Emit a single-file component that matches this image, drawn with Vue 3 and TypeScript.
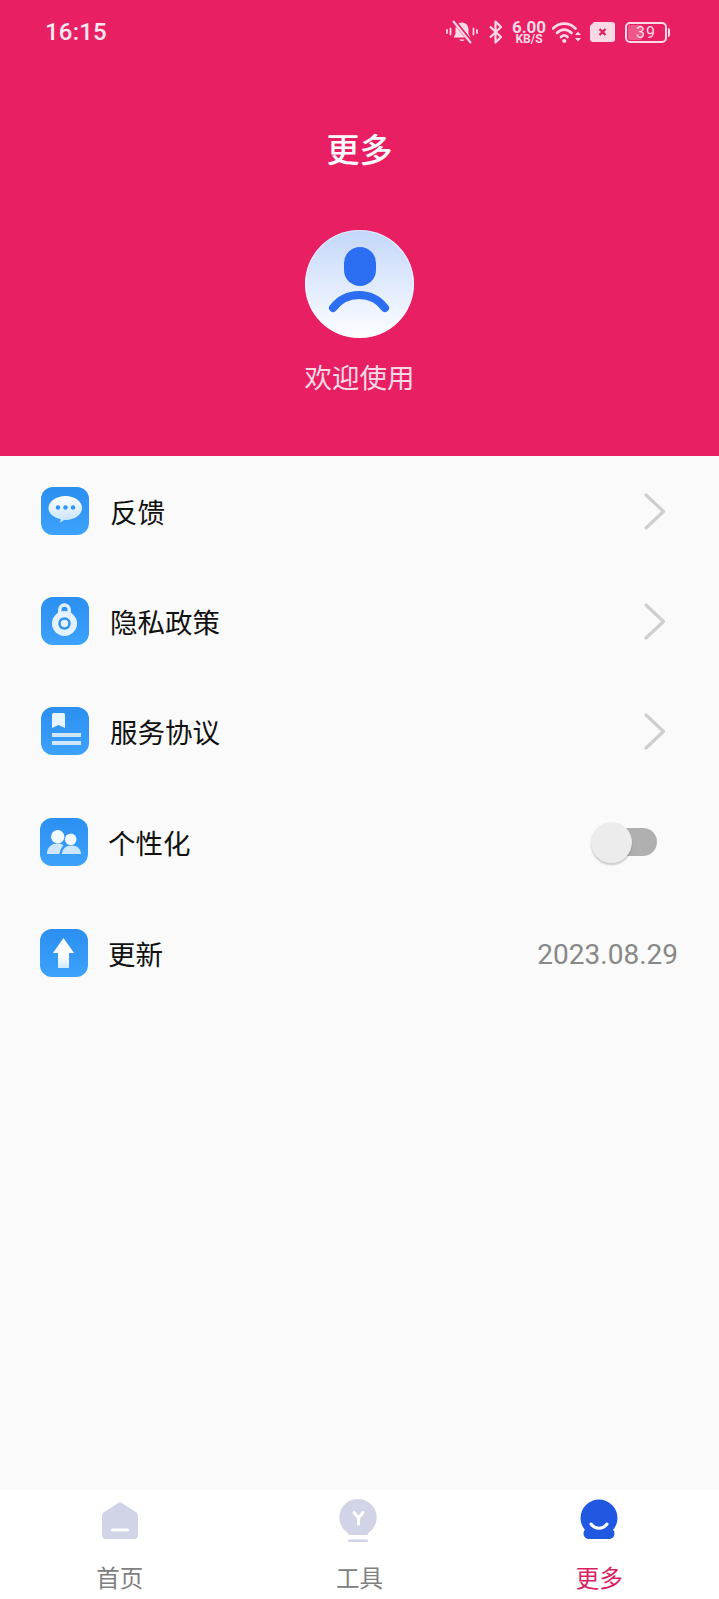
<script setup lang="ts">
const tabs = [
  { key: 'home', label: '首页' },
  { key: 'tool', label: '工具' },
  { key: 'more', label: '更多', active: true },
]
</script>

<template>
  <div class="page">
    <header class="hero">
      <div class="status">
        <span class="time">16:15</span>
        <div class="status-icons">
          <svg class="bell" width="32" height="24" viewBox="0 0 32 24">
            <path d="M16 2.5c-4 0-6.5 3-6.5 7v4.5L7.5 17.5h17L22.500 14V9.500c0-4-2.500-7-6.500-7z" fill="#fcd9e4" />
            <path d="M13.500 19.500h5c-.3 2-4.700 2-5 0z" fill="#fcd9e4" />
            <path d="M8 1l17 21" stroke="#e91f63" stroke-width="4" />
            <path d="M7.500 1.500l17 21" stroke="#fcd9e4" stroke-width="2" stroke-linecap="round" />
            <path d="M1 10v3M4.500 8.500v6M27.500 8.500v6M31 10v3" stroke="#fcd9e4" stroke-width="1.800" stroke-linecap="round" />
          </svg>
          <svg class="bt" width="13" height="24" viewBox="0 0 13 24">
            <path d="M1 6.500l11 10.500-5.500 5.500V1.500L12 7 1 17.500" fill="none" stroke="#fcd9e4" stroke-width="2.200" stroke-linejoin="round" />
          </svg>
          <div class="speed"><span class="speed-num">6.00</span><span class="speed-unit">KB/S</span></div>
          <svg class="wifi" width="30" height="24" viewBox="0 0 30 24">
            <path d="M1 8.500c6.500-6.500 16-6.500 22.500 0M5 13c4.500-4.500 10-4.500 14.500 0M9 17c2.300-2.200 4.300-2.200 6.500 0" fill="none" stroke="#fcd9e4" stroke-width="2.600" stroke-linecap="round" />
            <circle cx="12.300" cy="21" r="2.100" fill="#fcd9e4" />
            <path d="M26 11.500l3 3.500h-6zM26 21.500l-3-3.500h6z" fill="#fcd9e4" />
          </svg>
          <svg class="sim" width="25" height="20" viewBox="0 0 25 20">
            <path d="M4 0h18a3 3 0 0 1 3 3v14a3 3 0 0 1-3 3H3a3 3 0 0 1-3-3V4z" fill="#fcd9e4" />
            <path d="M9.500 7l6 6M15.500 7l-6 6" stroke="#d81c5c" stroke-width="2.200" />
          </svg>
          <div class="battery">
            <div class="battery-body"><span class="battery-fill"></span><span class="battery-num">39</span></div>
            <span class="battery-cap"></span>
          </div>
        </div>
      </div>

      <h1 class="title">更多</h1>

      <div class="avatar">
        <svg width="109" height="108" viewBox="0 0 109 108">
          <rect x="39" y="17" width="32" height="39" rx="16" fill="#2b6ef2" />
          <path d="M28 78A32.500 32.500 0 0 1 80 78" fill="none" stroke="#2b6ef2" stroke-width="8" stroke-linecap="round" />
        </svg>
      </div>
      <p class="welcome">欢迎使用</p>
    </header>

    <main class="list">
      <div class="row row-a">
        <span class="app-icon">
          <svg width="48" height="48" viewBox="0 0 48 48">
            <defs>
              <linearGradient id="bubble" x1="0" y1="0" x2="0" y2="1">
                <stop offset="0" stop-color="#ffffff" />
                <stop offset="1" stop-color="#c4e2fd" />
              </linearGradient>
            </defs>
            <path d="M24.500 9c9 0 16.500 5.400 16.500 12s-7.500 12-16.500 12c-.5 0-1 0-1.500-.1-1.300 1.300-2.600 2.100-4 2.500 .5-1.200 .7-2.300 .6-3.300C12.300 30.600 7.500 26.200 7.500 21 7.500 14.400 15.500 9 24.500 9z" fill="url(#bubble)" />
            <circle cx="17" cy="20.500" r="2.200" fill="#2f93f3" />
            <circle cx="24.500" cy="20.500" r="2.200" fill="#2f93f3" />
            <circle cx="32" cy="20.500" r="2.200" fill="#2f93f3" />
          </svg>
        </span>
        <span class="label">反馈</span>
        <svg class="chevron" width="22" height="37" viewBox="0 0 22 37">
          <path d="M2 2l17.500 16.500L2 35" fill="none" stroke="#cfcfcf" stroke-width="3.200" stroke-linecap="round" stroke-linejoin="round" />
        </svg>
      </div>

      <div class="row row-a">
        <span class="app-icon">
          <svg width="48" height="48" viewBox="0 0 48 48">
            <path d="M18.750 17v-4.250a4.750 4.750 0 0 1 9.500 0V17" fill="none" stroke="#dff0ff" stroke-width="3.500" />
            <circle cx="23.500" cy="26.500" r="12.500" fill="#e4f2ff" />
            <circle cx="23.500" cy="26.500" r="5" fill="none" stroke="#2f93f3" stroke-width="2.500" />
          </svg>
        </span>
        <span class="label">隐私政策</span>
        <svg class="chevron" width="22" height="37" viewBox="0 0 22 37">
          <path d="M2 2l17.500 16.500L2 35" fill="none" stroke="#cfcfcf" stroke-width="3.200" stroke-linecap="round" stroke-linejoin="round" />
        </svg>
      </div>

      <div class="row row-a">
        <span class="app-icon">
          <svg width="48" height="48" viewBox="0 0 48 48">
            <path d="M11 7.500a1.500 1.500 0 0 1 1.500-1.500h10a1.500 1.500 0 0 1 1.500 1.500V21l-6.500-3-6.500 3z" fill="#e8f4ff" />
            <rect x="11" y="26" width="29" height="4" fill="#cfe6fd" />
            <rect x="11" y="34" width="29" height="4" fill="#cfe6fd" />
          </svg>
        </span>
        <span class="label">服务协议</span>
        <svg class="chevron" width="22" height="37" viewBox="0 0 22 37">
          <path d="M2 2l17.500 16.500L2 35" fill="none" stroke="#cfcfcf" stroke-width="3.200" stroke-linecap="round" stroke-linejoin="round" />
        </svg>
      </div>

      <div class="row row-b row-tall">
        <span class="app-icon">
          <svg width="48" height="48" viewBox="0 0 48 48">
            <circle cx="17.700" cy="18.700" r="6.700" fill="#f2f9ff" />
            <circle cx="30.700" cy="21.300" r="5.800" fill="#f2f9ff" />
            <path d="M7 36c0-6 4-10.500 10.500-10.500 2.500 0 4.500.6 6 1.700C21 29.700 20 32.500 19.500 36z" fill="#cfe7fe" />
            <path d="M22 36c.4-5.500 4-8.500 9.500-8.500s9.100 3 9.500 8.500z" fill="#cfe7fe" />
          </svg>
        </span>
        <span class="label">个性化</span>
        <div class="toggle"><span class="toggle-thumb"></span></div>
      </div>

      <div class="row row-b">
        <span class="app-icon">
          <svg width="48" height="48" viewBox="0 0 48 48">
            <defs>
              <linearGradient id="arrow" x1="0" y1="0" x2="0" y2="1">
                <stop offset="0.600" stop-color="#ffffff" />
                <stop offset="1" stop-color="#cfe7fe" />
              </linearGradient>
            </defs>
            <path d="M23.500 9L34 24h-5v15H18V24h-5z" fill="url(#arrow)" />
          </svg>
        </span>
        <span class="label">更新</span>
        <span class="date">2023.08.29</span>
      </div>
    </main>

    <nav class="tabbar">
      <div v-for="tab in tabs" :key="tab.key" class="tab" :class="{ active: tab.active }">
        <svg width="40" height="44" viewBox="0 -2 40 44">
          <template v-if="tab.key === 'home'">
            <path d="M17.500 3.500a4 4 0 0 1 5 0l12.500 8A5 5 0 0 1 38 16v19a4 4 0 0 1-4 4H6a4 4 0 0 1-4-4V16a5 5 0 0 1 3-4.500z" fill="#d0d4e6" />
            <rect x="11" y="28.500" width="18" height="3" rx="1.500" fill="#fff" />
          </template>
          <template v-else-if="tab.key === 'tool'">
            <path d="M19 -1a18.500 18.500 0 0 1 11 33.500c-1 .8-1.500 1.500-1.500 2.500h-19c0-1-.5-1.700-1.500-2.500A18.500 18.500 0 0 1 19 -1z" fill="#d0d4e6" />
            <path d="M15 12.500l4.500 5.500 4.500-5.500M19.500 18v6" fill="none" stroke="#fff" stroke-width="3" stroke-linecap="round" stroke-linejoin="round" />
            <rect x="9" y="39.500" width="20" height="2.500" rx="1" fill="#d0d4e6" />
          </template>
          <template v-else>
            <circle cx="20" cy="18" r="18.500" fill="#2158e2" />
            <rect x="4.500" y="28" width="31" height="11" rx="5.500" fill="#2158e2" />
            <path d="M12 24c4 5.500 12 5.500 16 0" fill="none" stroke="#fff" stroke-width="3" stroke-linecap="round" />
          </template>
        </svg>
        <span class="tab-label">{{ tab.label }}</span>
      </div>
    </nav>
  </div>
</template>

<style>
html, body { margin: 0; background: #fafafa; }
</style>

<style scoped>
.page {
  display: flex;
  flex-direction: column;
  width: 719px;
  height: 1599px;
  overflow: hidden;
  background: #fafafa;
  font-family: "Noto Sans CJK SC", "Noto Sans", sans-serif;
}

.hero {
  display: flex;
  flex-direction: column;
  align-items: center;
  height: 456px;
  background: #e91f63;
  color: #fff;
}

.status {
  display: flex;
  align-items: center;
  justify-content: space-between;
  align-self: stretch;
  box-sizing: border-box;
  height: 64px;
  padding: 0 49px 0 45px;
  color: #fcd9e4;
}

.time {
  font-family: Roboto, sans-serif;
  font-size: 24px;
  font-weight: 500;
  letter-spacing: 0.2px;
  color: #fde8ef;
}

.status-icons {
  display: flex;
  align-items: center;
}

.bt { margin-left: 11px; }
.wifi { margin-left: 6px; }
.sim { margin-left: 8px; }

.speed {
  display: flex;
  flex-direction: column;
  align-items: center;
  width: 34px;
  margin-left: 10px;
  font-family: Roboto, sans-serif;
  font-weight: 700;
}

.speed-num { font-size: 17px; line-height: 14px; }
.speed-unit { font-size: 12px; line-height: 11px; }

.battery {
  display: flex;
  align-items: center;
  margin-left: 10px;
}

.battery-body {
  position: relative;
  box-sizing: border-box;
  display: flex;
  align-items: center;
  justify-content: center;
  width: 42px;
  height: 21px;
  border: 2px solid #fcd9e4;
  border-radius: 5px;
  overflow: hidden;
}

.battery-fill {
  position: absolute;
  left: 1px;
  top: 1px;
  bottom: 1px;
  width: 14px;
  border-radius: 2px;
  background: rgba(252, 217, 228, 0.3);
}

.battery-num {
  position: relative;
  font-family: Roboto, sans-serif;
  font-size: 16px;
  letter-spacing: 1px;
  line-height: 17px;
}

.battery-cap {
  width: 2px;
  height: 9px;
  margin-left: 1px;
  border-radius: 0 2px 2px 0;
  background: #fcd9e4;
}

.title {
  margin: 62px 0 0;
  font-size: 33px;
  font-weight: 500;
  line-height: 44px;
}

.avatar {
  width: 109px;
  height: 108px;
  margin-top: 60px;
  border-radius: 50%;
  background: linear-gradient(180deg, #c3d7fa 0%, #fdfeff 100%);
  box-shadow: inset 0 0 0 1px rgba(255, 255, 255, 0.5);
}

.avatar svg { display: block; }

.welcome {
  margin: 18px 0 0;
  font-size: 27.500px;
  line-height: 40px;
  color: #fcd9e4;
}

.list {
  flex: 1;
}

.row {
  display: flex;
  align-items: center;
  height: 110px;
}

.row-a { padding: 0 53px 0 41px; }
.row-b { padding: 0 41px 0 40px; }
.row-tall { height: 112px; }

.app-icon {
  flex: none;
  width: 48px;
  height: 48px;
  border-radius: 12px;
  background: linear-gradient(180deg, #2a8ff0 0%, #3da2fb 100%);
}

.app-icon svg { display: block; }

.label {
  flex: 1;
  margin-left: 21px;
  font-size: 27.500px;
  color: #111;
}

.row-b .label { margin-left: 20px; }

.toggle {
  position: relative;
  width: 55px;
  height: 28px;
  margin-right: 21px;
  border-radius: 14px;
  background: #b0b0b0;
}

.toggle-thumb {
  position: absolute;
  left: -11px;
  top: -6px;
  width: 41px;
  height: 41px;
  border-radius: 50%;
  background: #ececec;
  box-shadow: 0 2px 2px rgba(0, 0, 0, 0.2);
}

.date {
  margin-top: 2px;
  font-family: Roboto, sans-serif;
  font-size: 28px;
  color: #888;
}

.tabbar {
  display: grid;
  grid-template-columns: repeat(3, 1fr);
  height: 109px;
  background: #fff;
}

.tab {
  display: flex;
  flex-direction: column;
  align-items: center;
  padding-top: 8px;
}

.tab svg { display: block; overflow: visible; }

.tab-label {
  margin-top: 18px;
  font-size: 23.500px;
  line-height: 34px;
  color: #808080;
}

.tab.active .tab-label { color: #d81f63; }
</style>
